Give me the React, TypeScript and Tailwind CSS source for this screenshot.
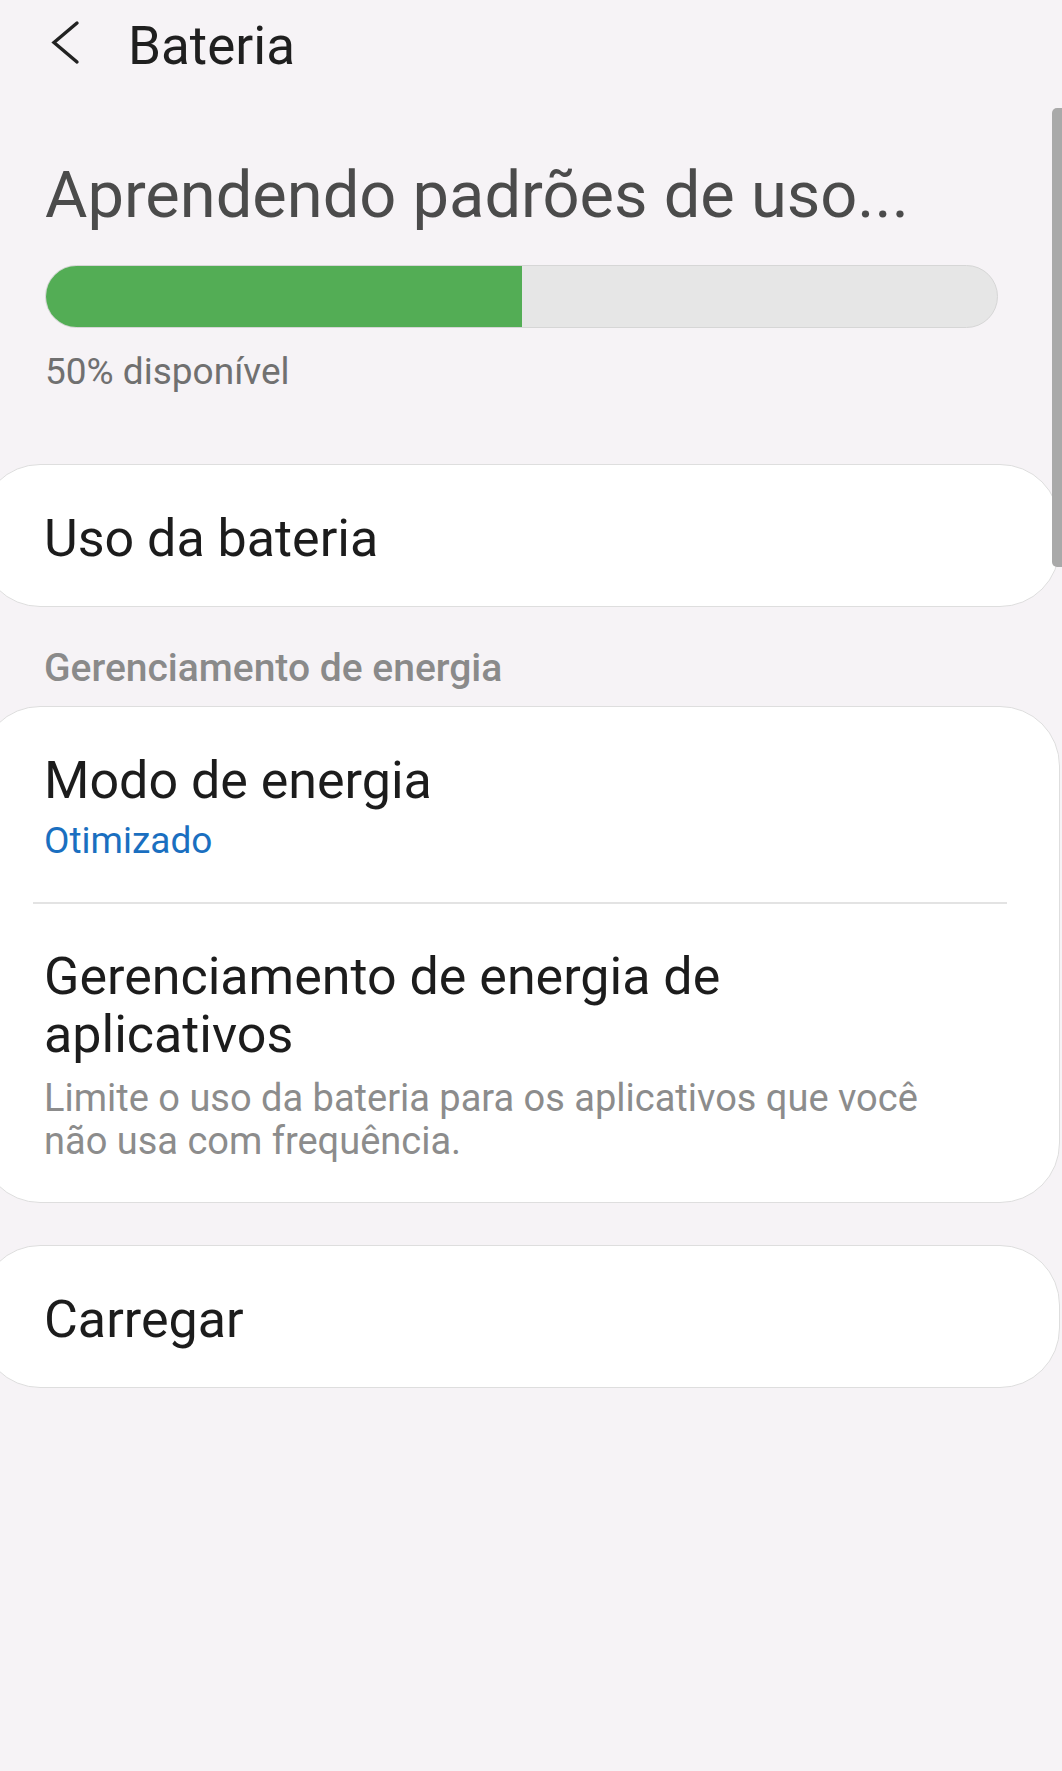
import React from "react";

function BackIcon() {
  return (
    <svg width="30" height="46" viewBox="0 0 30 46" fill="none">
      <polyline
        points="27,3 4,22.5 27,42"
        stroke="#222222"
        strokeWidth="3.4"
        strokeLinecap="round"
        strokeLinejoin="miter"
      />
    </svg>
  );
}

export default function App() {
  return (
    <div className="relative h-[1771px] w-full overflow-hidden bg-[#f6f3f6] font-['Roboto','Noto_Sans',sans-serif]">
      {/* header */}
      <div className="flex items-start pl-[50px] pt-[20px]">
        <BackIcon />
        <span className="ml-[48px] text-[53px] leading-[53px] text-[#1f1f1f]">Bateria</span>
      </div>

      {/* status */}
      <div className="pl-[45px] pr-[64px]">
        <h1 className="mt-[90px] text-[65px] leading-[65px] text-[#4b4b4b]">
          Aprendendo padrões de uso...
        </h1>
        <div className="mt-[37px] flex h-[63px] w-[953px] overflow-hidden rounded-full border border-[#d6d6d6] bg-[#e6e6e6]">
          <div className="h-full w-1/2 bg-[#53ad55]" />
        </div>
        <p className="mt-[25px] text-[37px] leading-[37px] text-[#707070]">50% disponível</p>
      </div>

      {/* battery usage */}
      <div className="ml-[-20px] mt-[74px] flex h-[143px] w-[1080px] items-center rounded-[60px] border border-[#dedede] bg-white pl-[63px] pt-[6px]">
        <span className="text-[52px] leading-[52px] text-[#1c1c1c]">Uso da bateria</span>
      </div>

      <p className="ml-[44px] mt-[42px] text-[39px] font-medium leading-[39px] text-[#8a8a8a]">
        Gerenciamento de energia
      </p>

      {/* power management */}
      <div className="ml-[-20px] mt-[18px] w-[1080px] rounded-[60px] border border-[#dedede] bg-white pb-[39px]">
        <div className="pl-[63px] pt-[48px]">
          <p className="text-[52px] leading-[52px] text-[#1c1c1c]">Modo de energia</p>
          <p className="mt-[15px] text-[37px] leading-[37px] text-[#1a6fc0]">Otimizado</p>
        </div>
        <div className="mx-[52px] mt-[43px] h-[2px] bg-[#e3e3e3]" />
        <div className="max-w-[966px] pl-[63px] pt-[44px]">
          <p className="text-[52px] leading-[58px] text-[#1c1c1c]">
            Gerenciamento de energia de aplicativos
          </p>
          <p className="mt-[13px] text-[38px] leading-[43px] text-[#8c8c8c]">
            Limite o uso da bateria para os aplicativos que você não usa com frequência.
          </p>
        </div>
      </div>

      {/* charging */}
      <div className="ml-[-20px] mt-[42px] flex h-[143px] w-[1080px] items-center rounded-[60px] border border-[#dedede] bg-white pl-[63px] pt-[6px]">
        <span className="text-[52px] leading-[52px] text-[#1c1c1c]">Carregar</span>
      </div>

      {/* scrollbar */}
      <div className="absolute right-0 top-[108px] h-[459px] w-[10px] rounded-l-[5px] bg-[#a9a9a9]" />
    </div>
  );
}
